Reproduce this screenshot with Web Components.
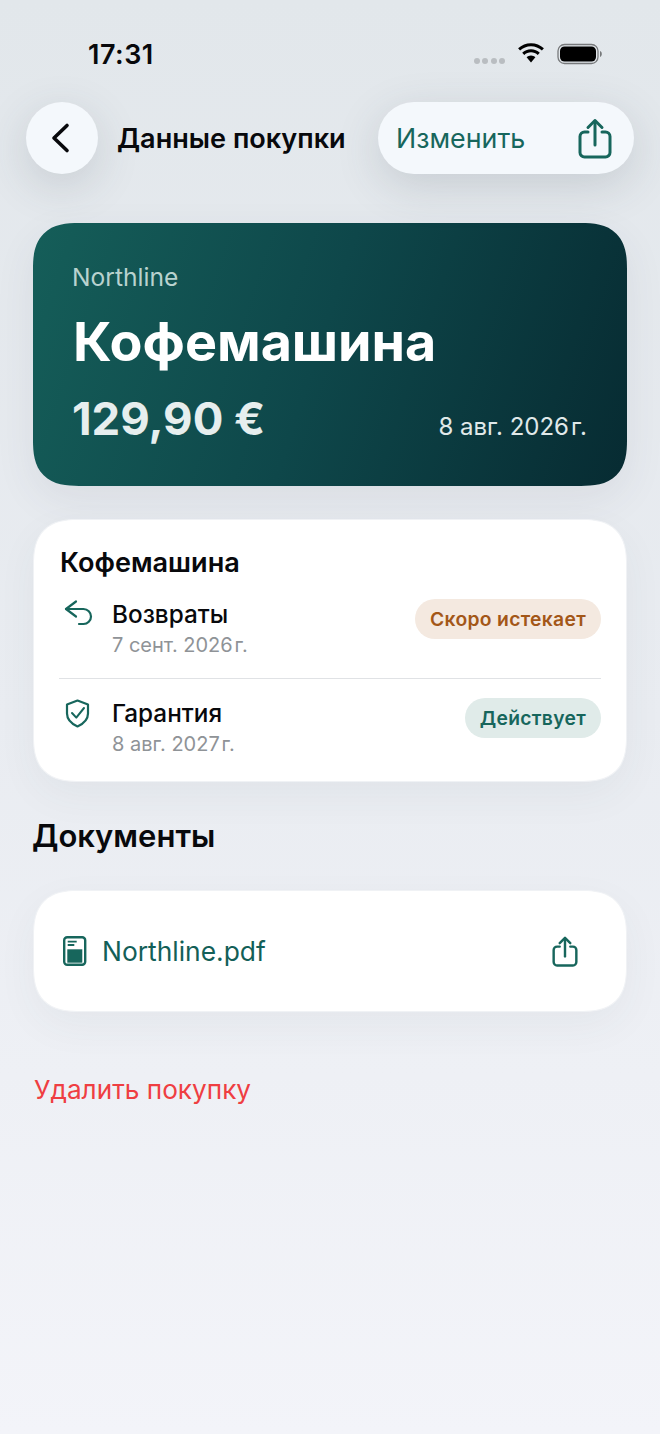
<!DOCTYPE html>
<html lang="ru">
<head>
<meta charset="utf-8">
<title>Данные покупки</title>
<style>
	html, body { margin: 0; padding: 0; }
	body {
		width: 660px;
		height: 1434px;
		overflow: hidden;
		font-family: Inter, "Noto Sans", sans-serif;
		background: linear-gradient(180deg, #e2e7eb 0%, #e9ecf1 50%, #f3f4f9 100%);
	}
	purchase-page { display: block; }
</style>
</head>
<body>
<purchase-page></purchase-page>
<script>
const SHARE_ICON = `<path d="M10 14H6.500A4.500 4.500 0 0 0 2 18.500v16A4.500 4.500 0 0 0 6.500 39h21a4.500 4.500 0 0 0 4.500-4.500v-16a4.500 4.500 0 0 0-4.500-4.500H24"/><path d="M17 27V3"/><path d="M10 9.500 17 2.500l7 7"/>`;

class StatusBar extends HTMLElement {
	constructor() {
		super();
		this.attachShadow({mode:"open"});
		this.shadowRoot.innerHTML = `
		<style>
			:host {
				display: flex;
				justify-content: space-between;
				align-items: center;
				height: 102px;
				box-sizing: border-box;
				padding: 6px 58px 0 88px;
			}
			.time { font-size: 27px; font-weight: 600; color: #08090c; letter-spacing: .5px; }
			.right { display: flex; align-items: center; }
			.dots { display: flex; gap: 2.500px; margin: 13px 12px 0 0; }
			.dots i { width: 6px; height: 6px; border-radius: 50%; background: #b9bdc1; }
			svg { display: block; }
		</style>
		<span class="time">17:31</span>
		<div class="right">
			<div class="dots"><i></i><i></i><i></i><i></i></div>
			<svg width="28" height="22" viewBox="0 0 28 22" style="margin-right:12px"><path d="M14 3.200c4.200 0 8 1.600 10.900 4.300l2-2.200C23.400 2 18.900.2 14 .2S4.600 2 1.100 5.300l2 2.200C6 4.800 9.800 3.200 14 3.200Z"/><path d="M14 9.300c2.600 0 5 1 6.700 2.700l2.100-2.200C20.500 7.600 17.400 6.200 14 6.200S7.500 7.600 5.200 9.800L7.300 12C9 10.300 11.400 9.300 14 9.300Z"/><path d="M14 12.400c-1.700 0-3.200.7-4.400 1.800L14 19.500l4.400-5.300c-1.200-1.100-2.700-1.800-4.400-1.800Z"/></svg>
			<svg width="45" height="22" viewBox="0 0 45 22"><rect x="1" y="1.500" width="40" height="19" rx="6.500" fill="none" stroke="#77797b" stroke-width="1.300"/><rect x="3" y="3.500" width="36" height="15" rx="4.500" fill="#000"/><path d="M43 8v6c1.200-.4 1.800-1.600 1.800-3S44.200 8.400 43 8Z" fill="#77797b"/></svg>
		</div>`;
	}
}
customElements.define("status-bar", StatusBar);

class TopNav extends HTMLElement {
	constructor() {
		super();
		this.attachShadow({mode:"open"});
		this.shadowRoot.innerHTML = `
		<style>
			:host {
				display: flex;
				align-items: center;
				height: 72px;
				padding: 0 26px;
			}
			.back, .pill {
				height: 72px;
				background: #f4f8fc;
				box-shadow: 0 12px 44px rgba(60, 70, 85, .17);
			}
			.back {
				width: 72px;
				border-radius: 50%;
				display: flex;
				align-items: center;
				justify-content: center;
				flex: none;
			}
			.title {
				margin-left: 19px;
				font-size: 27.100px;
				font-weight: 600;
				color: #08090c;
				flex: 1;
				white-space: nowrap;
			}
			.pill {
				width: 256px;
				box-sizing: border-box;
				border-radius: 36px;
				display: flex;
				align-items: center;
				justify-content: space-between;
				padding: 0 22px 0 18px;
				font-size: 26.800px;
				color: #17665c;
				flex: none;
			}
			svg { display: block; fill: none; }
		</style>
		<div class="back">
			<svg width="24" height="34" viewBox="0 0 24 34"><path d="M17 4.500 4 17l13 12.500" stroke="#08090c" stroke-width="3.600" stroke-linecap="round" stroke-linejoin="round"/></svg>
		</div>
		<span class="title">Данные покупки</span>
		<div class="pill">
			<span>Изменить</span>
			<svg width="34" height="41" viewBox="0 0 34 41" stroke="#17665c" stroke-width="3" stroke-linecap="round" stroke-linejoin="round">${SHARE_ICON}</svg>
		</div>`;
	}
}
customElements.define("top-nav", TopNav);

class HeroCard extends HTMLElement {
	constructor() {
		super();
		this.attachShadow({mode:"open"});
		this.shadowRoot.innerHTML = `
		<style>
			:host {
				display: block;
				margin: 49px 33px 0;
				height: 263px;
				box-sizing: border-box;
				padding: 38px 40px 0 39px;
				border-radius: 46px;
				corner-shape: superellipse(1.4);
				background: linear-gradient(108deg, #155e59 0%, #0e474a 48%, #072b32 100%);
				box-shadow: 0 14px 40px rgba(60, 70, 85, .08);
			}
			.brand { font-size: 24.600px; line-height: 33px; color: #b9d2cf; }
			h1 { margin: 16px 0 0 1px; font-size: 53.800px; line-height: 64px; font-weight: 700; color: #fff; }
			.row { display: flex; justify-content: space-between; align-items: baseline; margin-top: 17px; }
			.price { font-size: 45.500px; line-height: 56px; font-weight: 700; color: #e6eeee; }
			.date { font-size: 24px; color: #e0e9e9; }
		</style>
		<div class="brand">Northline</div>
		<h1>Кофемашина</h1>
		<div class="row"><span class="price">129,90 €</span><span class="date">8 авг. 2026&#8202;г.</span></div>`;
	}
}
customElements.define("hero-card", HeroCard);

class WhiteCard extends HTMLElement {
	constructor() {
		super();
		this.attachShadow({mode:"open"});
		this.shadowRoot.innerHTML = `
		<style>
			:host {
				display: block;
				margin: 0 33px;
				box-sizing: border-box;
				border-radius: 46px;
				corner-shape: superellipse(1.4);
				background: #fff;
				border: 1px solid #f0f2f5;
				box-shadow: 0 14px 40px rgba(60, 70, 85, .05);
			}
		</style>
		<slot></slot>`;
	}
}
customElements.define("white-card", WhiteCard);

class StatusRow extends HTMLElement {
	constructor() {
		super();
		this.attachShadow({mode:"open"});
		const tone = this.getAttribute("tone");
		this.shadowRoot.innerHTML = `
		<style>
			:host { display: flex; align-items: flex-start; }
			.icon { width: 52px; flex: none; }
			.text { flex: 1; }
			.name { font-size: 24.300px; line-height: 30px; font-weight: 500; color: #08090c; }
			.sub { font-size: 20px; line-height: 26px; margin-top: 3px; color: #8f9397; }
			.badge {
				height: 40px;
				line-height: 40px;
				padding: 0 15px;
				border-radius: 20px;
				font-size: 19.300px;
				font-weight: 600;
				letter-spacing: .3px;
				background: ${tone === "warn" ? "#f4e9e0" : "#e0ebe9"};
				color: ${tone === "warn" ? "#a35718" : "#17665c"};
			}
		</style>
		<div class="icon"><slot name="icon"></slot></div>
		<div class="text">
			<div class="name">${this.getAttribute("name")}</div>
			<div class="sub">${this.getAttribute("date")}</div>
		</div>
		<span class="badge">${this.getAttribute("badge")}</span>`;
	}
}
customElements.define("status-row", StatusRow);

class PurchasePage extends HTMLElement {
	constructor() {
		super();
		this.attachShadow({mode:"open"});
		this.shadowRoot.innerHTML = `
		<style>
			:host { display: block; }
			.inner { padding: 27px 25px 0 26px; }
			.card-title { font-size: 27.100px; line-height: 32px; font-weight: 600; color: #08090c; margin-bottom: 20px; }
			hr { border: 0; height: 1px; background: #e0e2e5; margin: 20px 0 19px -1px; }
			svg { display: block; fill: none; stroke: #17665c; stroke-width: 2.200; stroke-linecap: round; stroke-linejoin: round; }
			.h2 { font-size: 31px; line-height: 36px; font-weight: 600; color: #08090c; margin: 36px 33px 36px 32px; }
			.doc {
				display: flex;
				align-items: center;
				height: 120px;
				padding: 0 48px 0 29px;
			}
			.doc-name { font-size: 26.400px; color: #135f58; margin-left: 15px; flex: 1; }
			.delete { font-size: 26.200px; line-height: 34px; color: #ef3e42; margin: 61px 33px 0 34px; }
			.gap { height: 33px; }
		</style>
		<status-bar></status-bar>
		<top-nav></top-nav>
		<hero-card></hero-card>
		<div class="gap"></div>
		<white-card>
			<div class="inner" style="height:261px;box-sizing:border-box">
				<div class="card-title">Кофемашина</div>
				<status-row name="Возвраты" date="7 сент. 2026&#8202;г." badge="Скоро истекает" tone="warn">
					<svg slot="icon" width="34" height="28" viewBox="0 0 34 28"><path d="M16 2.500 6 10l10 7.500"/><path d="M6 10h17.500a7.500 7.500 0 0 1 0 15H19"/></svg>
				</status-row>
				<hr>
				<status-row name="Гарантия" date="8 авг. 2027&#8202;г." badge="Действует">
					<svg slot="icon" width="34" height="30" viewBox="0 0 34 30"><path d="M17.500 2.500 28 6.500v9c0 6-4 10-10.500 13C11 25.500 7 21.500 7 15.500v-9Z"/><path d="m12 15 4.300 4.600L24 10" stroke-width="2"/></svg>
				</status-row>
			</div>
		</white-card>
		<div class="h2">Документы</div>
		<white-card>
			<div class="doc">
				<svg width="24" height="30" viewBox="0 0 24 30" style="stroke-width:2.400"><rect x="1.200" y="1.200" width="21" height="27.600" rx="3"/><path d="M4.700 5.700h9M4.700 9h6.600" stroke-width="1.800" stroke-linecap="butt"/><rect x="4.300" y="13.300" width="15" height="13.400" fill="#17665c" stroke="none"/></svg>
				<span class="doc-name">Northline.pdf</span>
				<svg width="26" height="31" viewBox="0 0 34 41" style="stroke-width:3.200">${SHARE_ICON}</svg>
			</div>
		</white-card>
		<div class="delete">Удалить покупку</div>`;
	}
}
customElements.define("purchase-page", PurchasePage);
</script>
</body>
</html>
